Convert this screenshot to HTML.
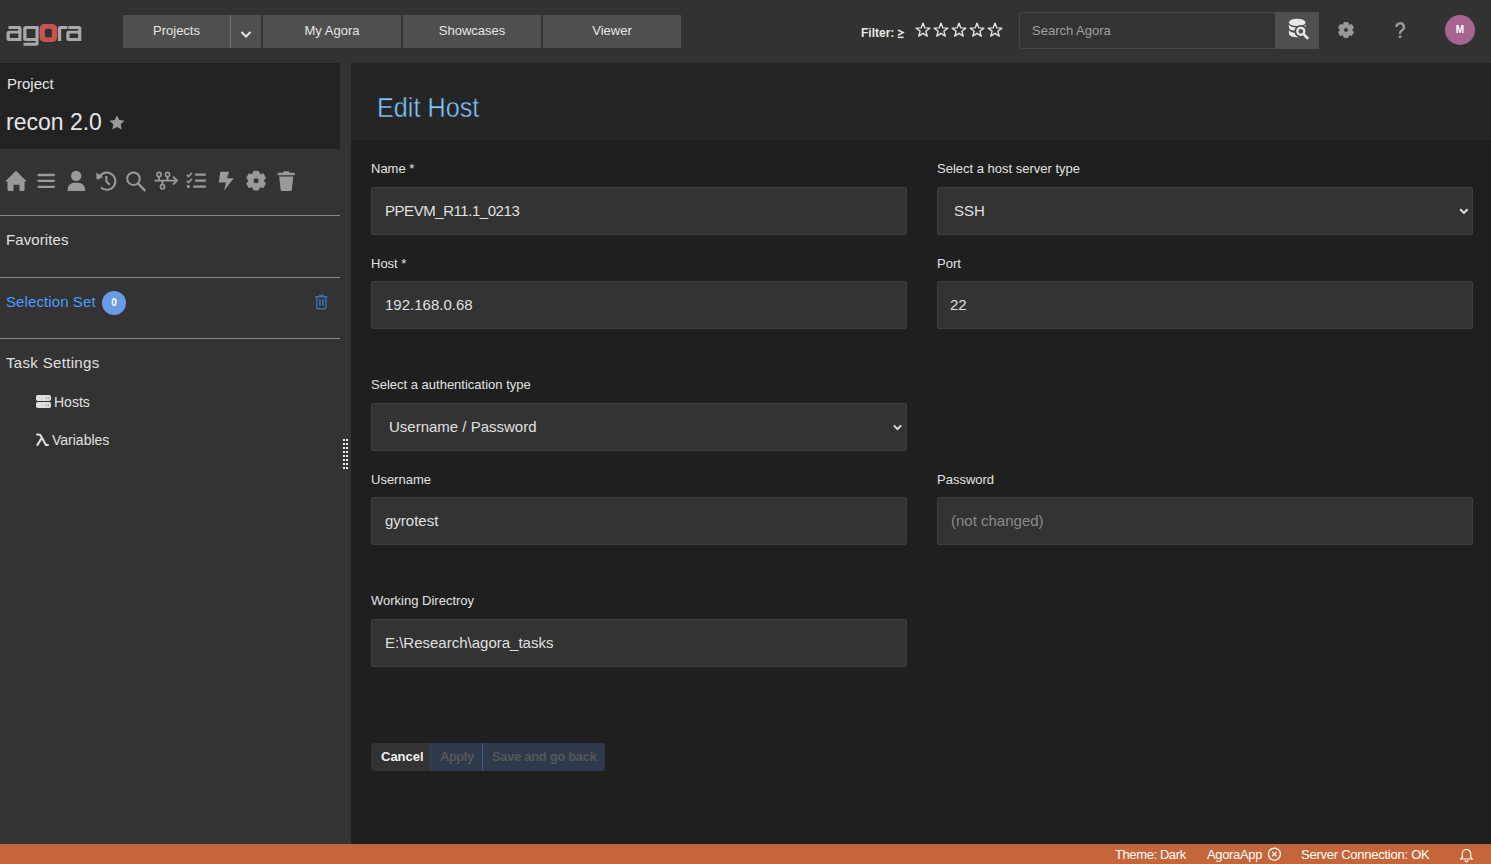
<!DOCTYPE html>
<html><head><meta charset="utf-8">
<style>
*{box-sizing:border-box;margin:0;padding:0}
html,body{width:1491px;height:864px;overflow:hidden;background:#333333;font-family:"Liberation Sans",sans-serif;color:#e0e0e0}
.abs{position:absolute}
.t{position:absolute;white-space:nowrap;line-height:1}
#top{position:absolute;left:0;top:0;width:1491px;height:63px;background:#323232}
.nb{position:absolute;top:15px;height:33px;background:#4f4f4f;color:#e6e6e6;font-size:13px;text-align:center;line-height:31px}
#side-h{position:absolute;left:0;top:63px;width:340px;height:86px;background:#222222}
#side{position:absolute;left:0;top:149px;width:340px;height:695px;background:#333333}
.sep{position:absolute;left:0;width:340px;height:1px;background:#888}
#split{position:absolute;left:340px;top:63px;width:11px;height:781px;background:#333333}
#main-h{position:absolute;left:351px;top:63px;width:1140px;height:77px;background:#252525}
#main{position:absolute;left:351px;top:140px;width:1140px;height:704px;background:#1f1f1f}
.lbl{position:absolute;font-size:13px;color:#e2e2e2;white-space:nowrap;line-height:1}
.inp{position:absolute;height:48px;background:#333333;border:1px solid #3e3e3e;border-radius:2px}
.inp span{position:absolute;top:0;line-height:46px;font-size:15px;color:#e0e0e0;white-space:nowrap}
#foot{position:absolute;left:0;top:844px;width:1491px;height:20px;background:#c4653a;color:#fff;font-size:13px}
</style></head><body>
<div id="top">
  <!-- logo -->
  <svg class="abs" style="left:0;top:0" width="90" height="60" viewBox="0 0 90 60">
  </svg>
  <div class="nb" style="left:123px;width:107px">Projects</div>
  <div class="abs" style="left:230px;top:15px;width:1px;height:33px;background:#707070"></div>
  <div class="nb" style="left:231px;width:30px"></div>
  <div class="nb" style="left:263px;width:138px">My Agora</div>
  <div class="nb" style="left:403px;width:138px">Showcases</div>
  <div class="nb" style="left:543px;width:138px">Viewer</div>
  <div class="t" style="left:861px;top:27px;font-size:12px;font-weight:bold;color:#e6e6e6">Filter:</div>
  <div class="abs" style="left:1019px;top:12px;width:258px;height:37px;border:1px solid #474747;border-radius:3px;background:#333"></div>
  <div class="t" style="left:1032px;top:24px;font-size:13px;color:#a0a0a0">Search Agora</div>
  <div class="abs" style="left:1275px;top:12px;width:44px;height:37px;background:#4f4f4f"></div>
  <div class="abs" style="left:1445px;top:15px;width:30px;height:30px;border-radius:50%;background:#a5658f;color:#fff;font-size:10px;font-weight:bold;text-align:center;line-height:30px">M</div>
</div>

<div id="side-h">
  <div class="t" style="left:7px;top:13px;font-size:15px;color:#e6e6e6">Project</div>
  <div class="t" style="left:6px;top:48px;font-size:23px;color:#e6e6e6">recon 2.0</div>
  <svg class="abs" style="left:108px;top:51px" width="18" height="17" viewBox="0 0 18 17"><path fill="#9a9a9a" d="M9 1.2l2.3 4.9 5.3.6-3.9 3.6 1 5.3L9 13l-4.7 2.6 1-5.3L1.4 6.7l5.3-.6z"/></svg>
</div>
<div id="side">
  <div class="sep" style="top:66px"></div>
  <div class="t" style="left:6px;top:83px;font-size:15px;color:#e0e0e0;letter-spacing:0.1px">Favorites</div>
  <div class="sep" style="top:128px"></div>
  <div class="t" style="left:6px;top:145px;font-size:15px;color:#4a9eff;letter-spacing:0.1px">Selection Set</div>
  <div class="abs" style="left:102px;top:142px;width:24px;height:24px;border-radius:50%;background:#6a9be6;color:#fff;font-size:10px;font-weight:bold;text-align:center;line-height:24px">0</div>
  <div class="sep" style="top:189px"></div>
  <div class="t" style="left:6px;top:206px;font-size:15px;color:#e0e0e0;letter-spacing:0.33px">Task Settings</div>
  <div class="t" style="left:54px;top:246px;font-size:14px;color:#e0e0e0">Hosts</div>
  <div class="t" style="left:52px;top:284px;font-size:14px;color:#e0e0e0">Variables</div>
</div>
<div id="split"></div>
<div id="main-h">
  <div class="t" style="left:26px;top:29.5px;font-size:28.5px;color:#80c8fd;-webkit-text-stroke:0.5px #252525;transform:scaleX(0.885);transform-origin:0 0">Edit Host</div>
</div>
<div id="main">
  <div class="lbl" style="left:20px;top:22px">Name *</div>
  <div class="inp" style="left:20px;top:47px;width:536px"><span style="left:13px;letter-spacing:-0.45px">PPEVM_R11.1_0213</span></div>
  <div class="lbl" style="left:586px;top:22px">Select a host server type</div>
  <div class="inp" style="left:586px;top:47px;width:536px"><span style="left:16px">SSH</span></div>
  <div class="lbl" style="left:20px;top:117px">Host *</div>
  <div class="inp" style="left:20px;top:141px;width:536px"><span style="left:13px">192.168.0.68</span></div>
  <div class="lbl" style="left:586px;top:117px">Port</div>
  <div class="inp" style="left:586px;top:141px;width:536px"><span style="left:12px">22</span></div>
  <div class="abs" style="left:20px;top:222px;width:1102px;height:1px;background:#1b1b1b"></div>
  <div class="abs" style="left:20px;top:438px;width:1102px;height:1px;background:#1b1b1b"></div>
  <div class="abs" style="left:20px;top:560px;width:1102px;height:1px;background:#1b1b1b"></div>
  <div class="abs" style="left:20px;top:574px;width:1102px;height:1px;background:#1b1b1b"></div>
  <div class="lbl" style="left:20px;top:238px">Select a authentication type</div>
  <div class="inp" style="left:20px;top:263px;width:536px"><span style="left:17px">Username / Password</span></div>
  <div class="lbl" style="left:20px;top:333px">Username</div>
  <div class="inp" style="left:20px;top:357px;width:536px"><span style="left:13px">gyrotest</span></div>
  <div class="lbl" style="left:586px;top:333px">Password</div>
  <div class="inp" style="left:586px;top:357px;width:536px"><span style="left:13px;color:#8a8a8a">(not changed)</span></div>
  <div class="lbl" style="left:20px;top:454px">Working Directroy</div>
  <div class="inp" style="left:20px;top:479px;width:536px"><span style="left:13px">E:\Research\agora_tasks</span></div>
  <div class="abs" style="left:20px;top:603px;width:59px;height:28px;background:#333;border-radius:3px 0 0 3px"></div>
  <div class="t" style="left:30px;top:610px;font-size:13px;font-weight:bold;color:#f0f0f0">Cancel</div>
  <div class="abs" style="left:79px;top:603px;width:175px;height:28px;background:#2e394b;border-radius:0 3px 3px 0"></div>
  <div class="abs" style="left:79px;top:603px;width:1px;height:28px;background:#34445e"></div>
  <div class="abs" style="left:131px;top:603px;width:1px;height:28px;background:#40598a"></div>
  <div class="t" style="left:89px;top:610px;font-size:13px;font-weight:bold;color:#575757;letter-spacing:-0.5px">Apply</div>
  <div class="t" style="left:141px;top:610px;font-size:13px;font-weight:bold;color:#575757;letter-spacing:-0.33px">Save and go back</div>
</div>
<div id="foot">
  <div class="t" style="left:1115px;top:4px;letter-spacing:-0.4px">Theme: Dark</div>
  <div class="t" style="left:1207px;top:4px;letter-spacing:-0.35px">AgoraApp</div>
  <div class="t" style="left:1301px;top:4px;letter-spacing:-0.25px">Server Connection: OK</div>
</div>

<svg id="ov" width="1491" height="864" viewBox="0 0 1491 864" style="position:absolute;left:0;top:0;pointer-events:none">
  <!-- logo -->
  <g fill="#a9a9a9" fill-rule="evenodd">
    <path d="M8.5 26h10.5a2.5 2.5 0 0 1 2.5 2.5V41H9a2.5 2.5 0 0 1-2.5-2.5v-5.3A2.5 2.5 0 0 1 9 30.7h9.3v-1.7H8.5z M9.8 33.6v4.5h8.5v-4.5z"/>
    <path d="M25.5 26h13.1v17.3a2.5 2.5 0 0 1-2.5 2.5H23.5v-3.1h12v-1.7H25.7a2.5 2.5 0 0 1-2.5-2.5V28.5A2.5 2.5 0 0 1 25.5 26z M26.5 29v8.9h9V29z"/>
    <path d="M60.5 26h6.8v3h-6.1v12H58V28.5A2.5 2.5 0 0 1 60.5 26z"/>
    <path d="M68.3 26h10.5a2.5 2.5 0 0 1 2.5 2.5V41H68.8a2.5 2.5 0 0 1-2.5-2.5v-5.3a2.5 2.5 0 0 1 2.5-2.5h9.3v-1.7H68.3z M69.6 33.6v4.5h8.5v-4.5z"/>
  </g>
  <path fill="#c9534f" fill-rule="evenodd" d="M44.5 24h7.8a5 5 0 0 1 5 5v8a5 5 0 0 1-5 5h-7.8a5 5 0 0 1-5-5V29a5 5 0 0 1 5-5z M46.5 28.8a1.6 1.6 0 0 0-1.6 1.6v5.6a1.6 1.6 0 0 0 1.6 1.6h3.8a1.6 1.6 0 0 0 1.6-1.6v-5.6a1.6 1.6 0 0 0-1.6-1.6z"/>
  <!-- nav chevron -->
  <path d="M241.5 32l4.5 4.5 4.5-4.5" fill="none" stroke="#e6e6e6" stroke-width="2"/>
  <!-- stars -->
  <g fill="none" stroke="#e2e2e2" stroke-width="1.4" stroke-linejoin="round">
    <path id="st" d="M923.00 23.10 L924.76 27.87 L929.85 28.08 L925.85 31.23 L927.23 36.12 L923.00 33.30 L918.77 36.12 L920.15 31.23 L916.15 28.08 L921.24 27.87Z"/>
    <use href="#st" x="18"/><use href="#st" x="36"/><use href="#st" x="54"/><use href="#st" x="72"/>
  </g>
  <path d="M898 30l5 2.6-5 2.6" fill="none" stroke="#e6e6e6" stroke-width="1.6"/><rect x="897.7" y="36.6" width="5.9" height="1.5" fill="#e6e6e6"/>
  <!-- db search icon -->
  <g fill="#e8e8e8">
    <ellipse cx="1297.2" cy="22.4" rx="8.3" ry="3.6"/>
    <path d="M1288.9 24.6q1.5 2.9 8.3 2.9t8.3-2.9v2.6q0 3.5-8.3 3.5t-8.3-3.5z"/>
    <path d="M1288.9 30.1q1.5 2.9 8.3 2.9t8.3-2.9v3.2q0 3.9-8.3 3.9t-8.3-3.9z"/>
  </g>
  <circle cx="1300.8" cy="31.3" r="6.4" fill="#4f4f4f"/>
  <path d="M1304 34.6l4.3 4.3" stroke="#4f4f4f" stroke-width="4.6" stroke-linecap="round"/>
  <circle cx="1300.8" cy="31.3" r="3.5" fill="none" stroke="#e8e8e8" stroke-width="2.3"/>
  <path d="M1303.8 34.4l3.6 3.6" stroke="#e8e8e8" stroke-width="2.6" stroke-linecap="round"/>
  <!-- gear top -->
  <path fill="#999" fill-rule="evenodd" stroke="#999" stroke-width="0.8" stroke-linejoin="round" d="M1343.48 24.34 L1344.06 22.4 L1347.94 22.4 L1348.52 24.34 L1349.64 24.98 L1351.75 24.44 L1353.6 27.79 L1352.17 29.35 L1352.17 30.65 L1353.6 32.21 L1351.75 35.56 L1349.64 35.02 L1348.52 35.66 L1347.94 37.6 L1344.06 37.6 L1343.48 35.66 L1342.36 35.02 L1340.25 35.56 L1338.4 32.21 L1339.83 30.65 L1339.83 29.35 L1338.4 27.79 L1340.25 24.44 L1342.36 24.98Z M1346.00 27.70 a2.3 2.3 0 1 0 0.01 0Z"/>
  <!-- question -->
  <path d="M1396.5 27a3.7 3.7 0 1 1 5.5 3.2c-1.3.8-2 1.6-2 3.2v.6" fill="none" stroke="#999" stroke-width="2.4"/>
  <rect x="1398.8" y="35.5" width="2.5" height="2.5" fill="#999"/>
  <!-- sidebar icons -->
  <g fill="#9a9a9a">
    <path d="M16 170.7L26.8 181.6h-2.2v8a1.5 1.5 0 0 1-1.5 1.5h-3.6v-6.4h-6v6.4H9a1.5 1.5 0 0 1-1.5-1.5v-8H5.2z"/>
    <rect x="37.5" y="173.8" width="17.5" height="2.4" rx="1"/>
    <rect x="37.5" y="179.7" width="17.5" height="2.4" rx="1"/>
    <rect x="37.5" y="185.7" width="17.5" height="2.4" rx="1"/>
    <circle cx="76.2" cy="175.9" r="5.2"/>
    <path d="M67.6 190.9v-1.5a6.5 6.5 0 0 1 6.5-6.6h4.4a6.5 6.5 0 0 1 6.5 6.6v1.5z"/>
    <path d="M218.7 182.6l1.6-10.8h8.8l-2.1 6.5h6.7l-9.6 12.4 1.9-8.1z"/>
    <path d="M277.7 172.8h5.3l.6-1.5h5.4l.6 1.5h5.2v2.5h-17.1z M279.2 176.6h14.1l-1.4 13a1.7 1.7 0 0 1-1.7 1.5h-7.9a1.7 1.7 0 0 1-1.7-1.5z"/>
    <path fill-rule="evenodd" stroke="#9a9a9a" stroke-width="0.8" stroke-linejoin="round" d="M252.93 173.57 L253.68 171.3 L258.52 171.3 L259.27 173.57 L260.68 174.39 L263.29 173.75 L265.5 177.94 L263.86 179.88 L263.86 181.52 L265.5 183.46 L263.29 187.65 L260.68 187.01 L259.27 187.83 L258.52 190.1 L253.68 190.1 L252.93 187.83 L251.52 187.01 L248.91 187.65 L246.7 183.46 L248.34 181.52 L248.34 179.88 L246.7 177.94 L248.91 173.75 L251.52 174.39Z M256.10 177.80 a2.9 2.9 0 1 0 0.01 0Z"/>
  </g>
  <g fill="none" stroke="#9a9a9a" stroke-width="2">
    <path d="M98.4 179.2A8.6 8.6 0 1 1 100.8 187.4"/>
    <path d="M106.3 176v5.3l3.4 3.4"/>
    <circle cx="133.5" cy="178.7" r="6.3"/>
    <path d="M138 183.5l7.3 7.3" stroke-width="2.4"/>
    <!-- flow -->
    <path d="M154.5 180.6h22.5M173 176.7l4 3.9-4 3.9M159 176.7v3.9M167.5 176.7v3.9M162.5 180.6v3.9" stroke-width="1.8"/>
    <circle cx="159" cy="174.5" r="2.1" stroke-width="1.6"/>
    <circle cx="167.5" cy="174.5" r="2.1" stroke-width="1.6"/>
    <circle cx="162.5" cy="186.7" r="2.1" stroke-width="1.6"/>
    <!-- checklist -->
    <path d="M186.8 174.8l1.7 1.7 3.4-3.6M186.8 180.8l1.7 1.7 3.4-3.6" stroke-width="1.6"/>
    <path d="M195 174.6h10.8M195 180.6h10.8M193.2 186.6h12.6" stroke-width="2.2"/>
  </g>
  <path d="M96.2 172.6l0.4 7 6.5-2.3z" fill="#9a9a9a"/>
  <circle cx="188.3" cy="186.6" r="1.6" fill="#9a9a9a"/>
  <!-- selection trash blue -->
  <g fill="none" stroke="#3a72b4" stroke-width="1.4">
    <path d="M315.2 296.8h12.4M319.8 296.3v-.8h3.2v.8M316.9 297.5v10.3a.9.9 0 0 0 .9.9h7.2a.9.9 0 0 0 .9-.9v-10.3"/>
    <path d="M319.9 299.3v6.8M322.9 299.3v6.8" stroke-width="1.6"/>
  </g>
  <!-- hosts icon -->
  <g fill="#dedede">
    <rect x="36" y="395" width="15" height="6" rx="1.8"/>
    <rect x="36" y="402" width="15" height="6" rx="1.8"/>
  </g>
  <g fill="#6a5f8a">
    <rect x="46" y="397.5" width="1" height="1"/><rect x="48" y="397.5" width="1" height="1"/>
    <rect x="46" y="404.5" width="1" height="1"/><rect x="48" y="404.5" width="1" height="1"/>
  </g>
  <!-- lambda -->
  <path d="M36.3 434.5h2.6c.9 0 1.5.5 1.9 1.3l5.1 9.2h2.8" fill="none" stroke="#e0e0e0" stroke-width="2.1"/>
  <path d="M37 445.8l4.3-7.3" fill="none" stroke="#e0e0e0" stroke-width="2.1"/>
  <!-- grip -->
  <g fill="#eeeeee" id="grip"><rect x="343" y="439" width="2" height="2"/><rect x="346" y="439" width="2" height="2"/><rect x="343" y="443" width="2" height="2"/><rect x="346" y="443" width="2" height="2"/><rect x="343" y="447" width="2" height="2"/><rect x="346" y="447" width="2" height="2"/><rect x="343" y="451" width="2" height="2"/><rect x="346" y="451" width="2" height="2"/><rect x="343" y="455" width="2" height="2"/><rect x="346" y="455" width="2" height="2"/><rect x="343" y="459" width="2" height="2"/><rect x="346" y="459" width="2" height="2"/><rect x="343" y="463" width="2" height="2"/><rect x="346" y="463" width="2" height="2"/><rect x="343" y="467" width="2" height="2"/><rect x="346" y="467" width="2" height="2"/></g>
  <!-- select chevrons -->
  <path d="M1460.2 209.2l3.7 3.7 3.7-3.7" fill="none" stroke="#e0e0e0" stroke-width="2"/>
  <path d="M893.8 425.4l3.7 3.7 3.7-3.7" fill="none" stroke="#e0e0e0" stroke-width="2"/>
  <!-- footer icons -->
  <circle cx="1274.4" cy="854.1" r="6" fill="none" stroke="#fff" stroke-width="1.3"/>
  <path d="M1272.2 851.9l4.4 4.4M1276.6 851.9l-4.4 4.4" stroke="#fff" stroke-width="1.3"/>
  <path d="M1466.5 849.5a4.2 4.2 0 0 0-4.2 4.2v3.3l-1.5 2h11.4l-1.5-2v-3.3a4.2 4.2 0 0 0-4.2-4.2z M1465 860.3a1.5 1.5 0 0 0 3 0" fill="none" stroke="#fff" stroke-width="1.2"/>
</svg>
</body></html>
